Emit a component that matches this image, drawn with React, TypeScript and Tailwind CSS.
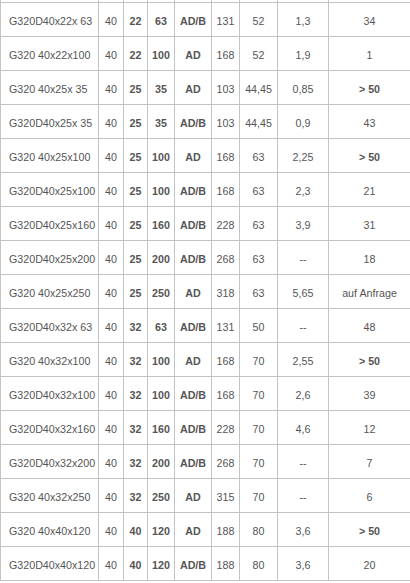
import React from 'react'

type Row = [string, string, string, string, string, string, string, string, string]

const rows: Row[] = [
  ['G320D40x22x 63', '40', '22', '63', 'AD/B', '131', '52', '1,3', '34'],
  ['G320 40x22x100', '40', '22', '100', 'AD', '168', '52', '1,9', '1'],
  ['G320 40x25x 35', '40', '25', '35', 'AD', '103', '44,45', '0,85', '> 50'],
  ['G320D40x25x 35', '40', '25', '35', 'AD/B', '103', '44,45', '0,9', '43'],
  ['G320 40x25x100', '40', '25', '100', 'AD', '168', '63', '2,25', '> 50'],
  ['G320D40x25x100', '40', '25', '100', 'AD/B', '168', '63', '2,3', '21'],
  ['G320D40x25x160', '40', '25', '160', 'AD/B', '228', '63', '3,9', '31'],
  ['G320D40x25x200', '40', '25', '200', 'AD/B', '268', '63', '--', '18'],
  ['G320 40x25x250', '40', '25', '250', 'AD', '318', '63', '5,65', 'auf Anfrage'],
  ['G320D40x32x 63', '40', '32', '63', 'AD/B', '131', '50', '--', '48'],
  ['G320 40x32x100', '40', '32', '100', 'AD', '168', '70', '2,55', '> 50'],
  ['G320D40x32x100', '40', '32', '100', 'AD/B', '168', '70', '2,6', '39'],
  ['G320D40x32x160', '40', '32', '160', 'AD/B', '228', '70', '4,6', '12'],
  ['G320D40x32x200', '40', '32', '200', 'AD/B', '268', '70', '--', '7'],
  ['G320 40x32x250', '40', '32', '250', 'AD', '315', '70', '--', '6'],
  ['G320 40x40x120', '40', '40', '120', 'AD', '188', '80', '3,6', '> 50'],
  ['G320D40x40x120', '40', '40', '120', 'AD/B', '188', '80', '3,6', '20'],
]

const widths = ['w-[98px]', 'w-[25px]', 'w-[24px]', 'w-[27px]', 'w-[37px]', 'w-[28px]', 'w-[38px]', 'w-[51px]', 'w-[82px]']

const cell = 'h-[34px] p-0 pt-[4px] border border-[#c3c3c3] align-middle whitespace-pre'

export default function App() {
  return (
    <div className="w-[410px] h-[583px] overflow-hidden bg-white">
      <table
        className="-mt-[32px] w-[410px] table-fixed border-collapse text-[10.7px] leading-[13px] text-[#555555]"
        style={{ fontFamily: '"Liberation Sans", Arial, sans-serif' }}
      >
        <colgroup>
          {widths.map((w, i) => (
            <col key={i} className={w} />
          ))}
        </colgroup>
        <tbody>
          {/* row above, cut off by the top of the view */}
          <tr>
            {widths.map((_, i) => (
              <td key={i} className={cell}></td>
            ))}
          </tr>
          {rows.map((r, i) => (
            <tr key={i}>
              <td className={cell + ' pl-[8px] text-left'}>{r[0]}</td>
              <td className={cell + ' text-center'}>{r[1]}</td>
              <td className={cell + ' text-center font-bold'}>{r[2]}</td>
              <td className={cell + ' text-center font-bold'}>{r[3]}</td>
              <td className={cell + ' text-center font-bold'}>{r[4]}</td>
              <td className={cell + ' text-center'}>{r[5]}</td>
              <td className={cell + ' text-center'}>{r[6]}</td>
              <td className={cell + ' text-center'}>{r[7]}</td>
              <td className={cell + (r[8] === '> 50' ? ' text-center font-bold' : ' text-center')}>{r[8]}</td>
            </tr>
          ))}
        </tbody>
      </table>
    </div>
  )
}
